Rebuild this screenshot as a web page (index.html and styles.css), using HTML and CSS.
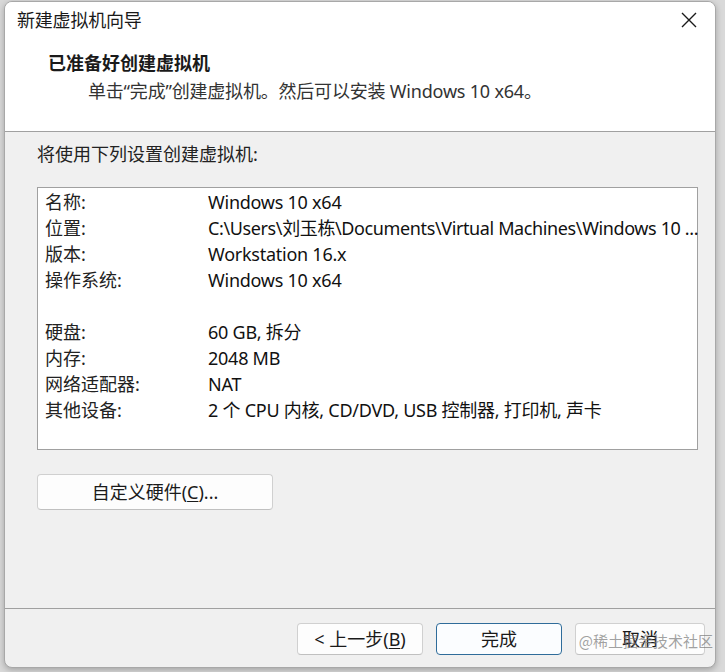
FILE: index.html
```html
<!DOCTYPE html>
<html lang="zh-CN">
<head>
<meta charset="utf-8">
<title>新建虚拟机向导</title>
<link rel="stylesheet" href="styles.css">
</head>
<body>
<div class="dialog">
  <div class="header">
    <div class="titlebar">
      <span class="title">新建虚拟机向导</span>
      <svg class="close" width="18" height="18" viewBox="0 0 18 18"><path d="M2 2 L16 16 M16 2 L2 16" stroke="#1a1a1a" stroke-width="1.4" fill="none"/></svg>
    </div>
    <div class="heading">已准备好创建虚拟机</div>
    <div class="subtitle">单击“完成”创建虚拟机。然后可以安装 Windows 10 x64。</div>
  </div>
  <div class="content">
    <div class="intro">将使用下列设置创建虚拟机:</div>
    <div class="summary">
      <div class="row"><span class="label">名称:</span><span class="value">Windows 10 x64</span></div>
      <div class="row"><span class="label">位置:</span><span class="value path">C:\Users\刘玉栋\Documents\Virtual Machines\Windows 10 ...</span></div>
      <div class="row"><span class="label">版本:</span><span class="value">Workstation 16.x</span></div>
      <div class="row"><span class="label">操作系统:</span><span class="value">Windows 10 x64</span></div>
      <div class="row blank"></div>
      <div class="row"><span class="label">硬盘:</span><span class="value">60 GB, 拆分</span></div>
      <div class="row"><span class="label">内存:</span><span class="value">2048 MB</span></div>
      <div class="row"><span class="label">网络适配器:</span><span class="value">NAT</span></div>
      <div class="row"><span class="label">其他设备:</span><span class="value">2 个 CPU 内核, CD/DVD, USB 控制器, 打印机, 声卡</span></div>
    </div>
    <button class="btn custom">自定义硬件(<u>C</u>)...</button>
  </div>
  <div class="footer">
    <button class="btn">&lt; 上一步(<u>B</u>)</button>
    <button class="btn primary">完成</button>
    <button class="btn cancel">取消</button>
  </div>
  <div class="watermark">@稀土掘金技术社区</div>
</div>
</body>
</html>
```
FILE: styles.css
```css
* { box-sizing: border-box; }
html, body { margin: 0; padding: 0; }
body {
  width: 725px;
  height: 672px;
  background: #d9d9d9;
  font-family: "Noto Sans", "Noto Sans CJK SC", sans-serif;
  font-size: 18px;
  color: #1a1a1a;
  overflow: hidden;
}
.dialog {
  position: relative;
  margin: 1px 0 0 4px;
  width: 712px;
  height: 667px;
  background: #f0f0f0;
  border: 1px solid #a8a8a8;
  border-radius: 8px;
  overflow: hidden;
  display: flex;
  flex-direction: column;
  box-shadow: 0 2px 6px rgba(0,0,0,0.25);
}
.header {
  background: #ffffff;
  height: 130px;
  border-bottom: 1px solid #a0a0a0;
  flex: none;
}
.titlebar {
  height: 36px;
  display: flex;
  align-items: center;
  justify-content: space-between;
  padding: 0 17px 0 12px;
}
.title { font-size: 18px; line-height: 36px; letter-spacing: -0.2px; }
.close { display: block; }
.heading {
  margin-top: 12px;
  padding-left: 43px;
  font-weight: 700;
  font-size: 18px;
  line-height: 26px;
}
.subtitle {
  margin-top: 2px;
  padding-left: 83px;
  font-size: 18px;
  line-height: 26px;
  color: #333;
  letter-spacing: -0.2px;
}
.content {
  flex: 1;
  padding: 9px 17px 0 32px;
}
.intro { line-height: 26px; color: #222; }
.summary {
  margin-top: 20px;
  width: 661px;
  height: 263px;
  background: #fff;
  border: 1px solid #a0a0a0;
  padding: 1px 0 0 7px;
}
.row {
  display: flex;
  height: 26px;
  line-height: 26px;
  white-space: nowrap;
}
.label { width: 163px; flex: none; color: #222; }
.value { color: #111; letter-spacing: -0.25px; }
.path { letter-spacing: -0.38px; }
.btn {
  font-family: "Noto Sans", "Noto Sans CJK SC", sans-serif;
  font-size: 18px;
  color: #1a1a1a;
  background: #fdfdfd;
  border: 1px solid #d0d0d0;
  border-bottom-color: #c0c0c0;
  border-radius: 4px;
  width: 126px;
  height: 32px;
  padding: 0;
  line-height: 30px;
}
.btn u { text-underline-offset: 2px; }
.cancel { width: 130px; }
.custom {
  margin-top: 24px;
  width: 236px;
  height: 36px;
}
.footer {
  flex: none;
  height: 59px;
  border-top: 1px solid #a0a0a0;
  display: flex;
  justify-content: flex-end;
  gap: 13px;
  padding: 14px 10px 0 0;
}
.primary {
  border: 1px solid #2f6c9a;
  background: #fbfdff;
}
.watermark {
  position: absolute;
  right: 2px;
  bottom: 16px;
  font-size: 15px;
  color: rgba(120,120,120,0.7);
  font-family: "Noto Sans CJK SC", sans-serif;
}
```
